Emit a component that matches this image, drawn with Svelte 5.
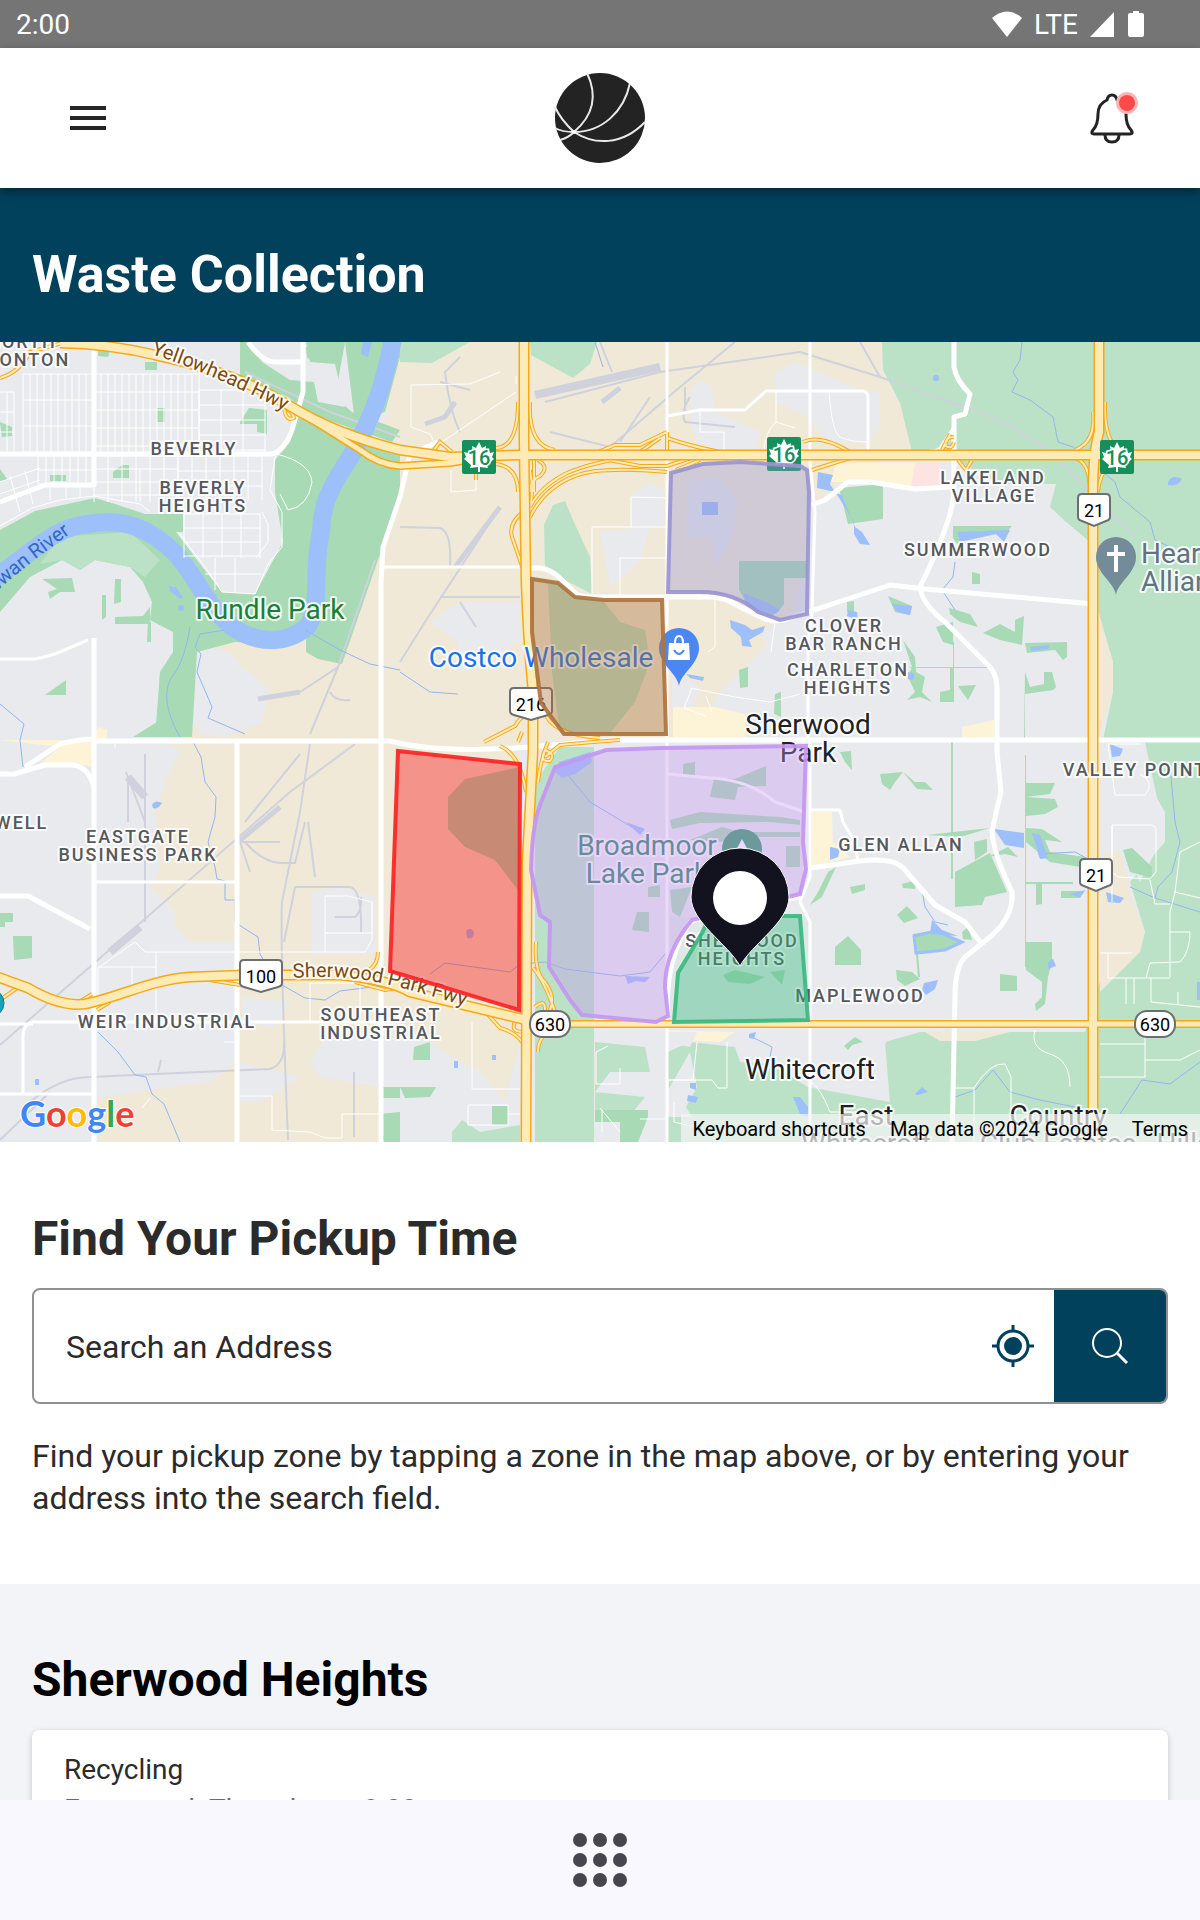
<script lang="ts">
	let address = '';

	// thin residential streets, drawn as a handful of regular grids
	function grid(x1: number, x2: number, y1: number, y2: number, stepX: number, stepY: number) {
		let d = '';
		for (let x = x1; x <= x2; x += stepX) d += `M${x} ${y1}V${y2}`;
		for (let y = y1; y <= y2; y += stepY) d += `M${x1} ${y}H${x2}`;
		return d;
	}

	const streets = [
		grid(23, 93, 32, 110, 7, 26),
		grid(38, 93, 114, 142, 8, 14),
		grid(94, 199, 32, 110, 7, 18),
		grid(199, 265, 48, 110, 22, 15),
		grid(94, 178, 114, 160, 14, 13),
		grid(178, 262, 114, 158, 14, 15),
		grid(184, 260, 172, 216, 19, 14),
		'M0 50H14V110M0 70H14M0 90H14M7 50V110M0 140L40 126M0 152L40 138M10 134L20 170M25 129L33 162M50 144V158M66 144V156M80 144V155M0 184L32 166L60 158L94 154M94 154L140 162L150 170M140 160V128',
		'M178 190L205 225L222 250L255 252L268 222L282 205V170L270 148L276 110M262 170L268 182V200L256 216M215 216V248M235 216V250M205 232H262',
		'M276 112Q310 120 312 140Q308 165 288 168L280 152',
		'M411 43V85L430 92L436 104M411 43L470 42L500 30M436 104L516 50M516 34V42',
		'M451 128V150L476 148V130M592 252V185H667M620 254V216H667M631 185V155L667 156M700 70V90H724V110M776 50V80L795 86M776 80Q765 90 764 108',
		'M829 50Q832 90 840 95Q850 100 868 100M715 256V305L708 310M775 280L771 310M690 346L735 355L770 360L800 352M706 354L712 370M692 346L684 366L706 374',
		'M145 610H365L372 598V560L348 554H325V610M325 591H372M98 672V626L135 600L145 610M156 610V680M98 625H156M132 625V645M310 680V641H360V675M240 754H272V788L310 790L325 796H342V772H380M224 700H237M150 756L142 766M115 401V406',
		'M472 680V747H520M468 763H508V783H468ZM508 772H520M596 710V742H620V726M596 710L608 704M697 700L693 738H668V770M668 738H712L718 746H727V700M640 777H666M600 766L620 790M602 768V790M674 760V780L700 786',
		'M811 740Q820 745 830 770H860M955 746H974V800M974 746Q990 720 1005 722L1011 735V800M1035 688Q1030 706 1050 712Q1070 718 1070 745M1100 702H1145V735H1100M1145 718H1180L1200 708',
		'M1112 483H1152Q1156 484 1156 488V530L1150 537L1118 535L1112 530ZM1112 483V560M1115 453H1145Q1156 440 1140 432M1115 453L1108 402H1140M1200 500L1180 510L1175 550L1170 570V635M1100 611H1132M1108 611V636H1170M1126 636V662M1134 636V662M1151 636V660L1200 665M1170 590H1190Q1190 610 1180 620L1150 621L1146 636M1178 650V662M1170 562H1155L1150 538M1175 550L1200 556M1145 688V702',
	];

	const minorRoads = [
		'M667 74L700 68H745L766 49H862Q868 49 868 56V110',
		'M667 0V800',
		'M810 0V120L815 170L812 270L808 300V398',
		'M810 398V535L800 560L810 580V800',
		'M0 317H35Q50 314 60 310L88 298',
		'M94 540H237',
		'M94 680H33Q23 682 23 695V752',
		'M110 680H400',
		'M0 752H94',
		'M668 432L710 436Q750 438 775 460L805 470',
		'M809 468H840L843 480L855 500L858 520',
		'M380 225H520',
		'M0 682H33',
	];

	const majorRoads = [
		'M94 0V143H45L0 160',
		'M0 112H272Q285 108 292 88L303 50V0M248 0Q262 20 275 20H303',
		'M94 296V800',
		'M237 398V800',
		'M438 100L410 112L400 155L383 205L381 240V800',
		'M0 432H14L45 423H72Q88 424 94 445M25 425L60 402Q80 397 94 397',
		'M94 399H390Q440 412 530 405L610 398H1200',
		'M520 226H540Q550 227 560 236L576 252Q582 255 592 255H712Q727 256 740 265L765 277Q780 281 790 276L890 243L925 247L1094 262',
		'M954 0V25Q956 38 970 52L965 72L954 75V150Q952 180 920 245Q922 262 945 280L985 320Q997 330 997 345V410L1001 450Q996 470 992 490Q993 510 1012 550Q1014 575 990 595L965 615Q955 625 955 655L952 800',
		'M954 87L942 105Q940 110 930 110M812 163L825 158L848 140H870L915 147L952 145',
		'M803 527L860 519Q895 515 905 528L935 563L965 580L982 602',
		'M0 554H28L90 587',
		'M668 674Q664 620 690 580Q730 565 800 555',
	];

	const highways = [
		'M60 1Q110 2 155 13Q235 30 290 64Q335 92 400 108L450 115L520 113H1200',
		'M290 64Q325 86 360 108Q380 123 400 124L450 121L500 113',
		'M524 -5V100L526 240Q528 300 533 350V410L527 520L526 805',
		'M1099 -5V90Q1093 110 1093 150V805',
		'M-5 634L28 646Q60 665 85 662C120 655 150 638 190 635L245 633H340Q390 638 410 650L526 678',
		'M570 682H1205',
	];

	const ramps = [
		'M0 36Q20 30 30 10L62 1',
		'M518 60Q518 105 496 106M530 60Q528 104 555 108M530 128Q534 150 530 165M518 150Q518 125 496 122',
		'M530 165Q540 145 565 132Q590 120 640 114M530 175Q545 145 575 134Q600 124 667 130M538 118Q550 125 540 134Q530 138 530 150M534 118V150M598 110L615 103H640L667 90M640 110L660 96M667 90V108M598 116L640 124L667 124L700 113',
		'M526 168Q508 180 512 195L524 230M284 66Q286 80 294 76Q292 68 284 66M434 108L440 100L452 110',
		'M667 96Q690 104 720 110M803 100Q820 92 850 110M812 128L850 116M676 128L700 118M942 108L950 92M954 95Q944 95 946 104Q952 108 954 100M958 118L966 128L972 118',
		'M1093 70Q1096 100 1075 108M1105 60Q1104 100 1120 108M1075 116Q1090 120 1090 150M1120 116Q1100 125 1098 150M1060 113L1064 116',
		'M484 400L515 384Q520 375 530 370M545 370Q550 392 600 396M518 400L522 390M548 400Q540 420 538 440M545 415L560 403Q590 400 620 398M500 404Q520 412 526 450M545 408Q556 412 550 419Q540 420 544 410',
		'M533 626Q545 640 555 670L565 676M536 600Q534 630 545 640Q556 655 550 668M522 700Q515 690 500 686L484 668M538 710Q538 695 550 690M515 680Q510 690 524 690M535 665Q545 656 545 668',
		'M0 658L20 644M76 662L92 652M97 668L110 660M210 638L245 628M210 638L240 643M340 634Q378 635 378 610M355 640L385 648L420 642',
		'M476 130V138',
	];

	const rails = [
		'M0 703L130 590L290 450L355 402',
		'M310 402L300 470L282 560Q280 600 288 798',
		'M460 90Q450 70 445 30L460 15M470 48L440 40M500 165L425 280L400 320M400 185L440 186Q452 190 450 225M520 255H440M460 260L476 285',
		'M600 0L612 30M690 55Q680 70 685 80L735 85M735 0L680 45L610 105L550 90M685 45V70M620 100L650 55M545 60L660 30L800 10',
		'M145 412V580M145 480L126 430M128 440V480M300 412L245 480M240 500H280M245 500Q262 520 280 521H295L305 480M295 545H350Q362 547 361 590M295 545L284 600M335 575H355Q362 570 361 555M240 500L250 530M308 480L315 535',
		'M30 760Q60 735 90 735L270 727Q285 722 284 700M158 730L161 718M0 798L50 750M354 730V795',
		'M375 218L338 325L300 350M338 325L310 392M330 350Q335 360 350 358',
		'M245 30L330 70L400 95M800 10L880 35L950 60Q1020 80 1060 120L1135 195',
		'M880 35L860 0',
	];

	const creeks = [
		'M225 288L200 292L195 305L201 312L197 330L212 365L208 376L245 392',
		'M190 285Q185 320 170 338Q160 360 180 395',
		'M305 288L340 308L370 322L400 328',
		'M0 362L24 382L20 398L23 425',
		'M400 330L430 350L458 352',
		'M193 400L201 415L205 440L216 455L215 475L208 500L215 525L217 537L225 539V558H235V580L242 585L258 595L260 612L270 630',
		'M282 643L305 656L325 658L340 649L372 645',
		'M98 690L118 710L135 733L146 735L152 752L164 762L180 800',
		'M430 632L445 621L510 630L520 622L545 620L565 627L620 634L650 630L665 612',
		'M568 433L590 460L640 490',
		'M1022 0L1020 18L1013 30L1018 38L1012 50L1030 58L1053 75L1058 100L1073 105L1115 140L1120 155L1150 180L1155 198L1170 205',
		'M955 220L953 235L942 248L955 268',
		'M1171 434L1175 480L1180 500L1172 530L1158 545L1155 556L1200 570M1130 545L1155 556',
		'M955 755L975 748L993 728L1010 750L1040 758L1100 770M1120 772L1142 738L1170 742L1200 720',
		'M922 548L925 565L935 580L948 583',
		'M1038 512L1075 510L1090 518',
		'M595 0L603 25',
		'M752 695L772 705L770 715',
	];

	const ponds = [
		'M818 130L833 133L830 142L835 150L817 146ZM836 151L842 153L855 185L862 190L870 203L860 202L854 192V180Z',
		'M957 190L1010 188L1004 200L996 192L960 200ZM848 268L857 270L858 278L847 274ZM892 262L912 264L910 273L897 270Z',
		'M702 160H718V173H702ZM730 278L745 283L752 288L765 284L763 290L749 298L752 305L742 304L741 295L731 286Z',
		'M686 332L704 335L703 339L690 336ZM1168 140Q1172 132 1182 137Q1178 145 1168 143Z',
		'M559 420L590 410L592 420L575 432L562 436L555 430Z',
		'M994 487L1024 491V506L1005 503ZM1032 491L1040 493L1048 516L1040 517ZM1110 402L1123 407L1120 414L1112 415ZM1106 550L1124 556L1120 561L1108 560ZM1070 552L1085 548L1080 556Z',
		'M830 505L840 507L838 515L830 518ZM924 641L938 638L935 647L926 653L922 648ZM1048 620L1053 617L1056 624L1048 627Z',
		'M625 634L650 635L645 640L636 639L628 642ZM626 480L645 487L640 493Z',
		'M466 589Q470 584 474 590Q474 598 467 596ZM152 463Q155 457 162 461Q158 468 153 466ZM454 719H458V726H454ZM492 713H496V718H492ZM35 737H39V743H35ZM1197 640H1200V658H1197Z',
		'M688 753L698 755L696 761L687 759ZM690 741H696V748L690 746ZM749 692L756 690L754 697L749 696ZM793 755H800L808 765V775L800 772ZM915 752L922 745L928 750L918 753Z',
		'M744 251L770 262L780 268L768 276L745 262ZM933 36A3 3 0 1 1 939 36A3 3 0 1 1 933 36ZM1030 305L1050 303L1048 307L1032 309ZM908 330L915 332L913 338L908 337Z',
		'M169 244L176 245L183 255L180 257L170 249ZM178 266A3 3 0 1 1 184 266A3 3 0 1 1 178 266Z',
	];

	const parks = [
		'M145 20H157V28H145ZM98 2H112L108 15L98 14ZM157 66H165V80H157ZM240 80L249 66L267 68V92L257 90V82H240ZM0 80L12 85V94L2 95ZM113 130L122 123H129V136H113ZM50 133H66V139H50ZM0 127L8 138L0 139Z',
		'M42 237L72 236L75 250H60L50 257L48 250L57 247ZM115 237H121V260L114 262ZM102 253H106V275L102 278ZM115 275L143 274L150 265V282H115ZM45 353L66 338V353ZM148 280H151V300H147Z',
		'M0 571H13V580H5V585H0ZM13 594H32V616L14 618ZM380 745H400V756H380ZM380 772L400 770V800H380ZM414 705L430 700V718H413ZM400 745L436 745L430 755L405 756ZM492 764H508V783H492Z',
		'M739 219H808V236H784V262L776 272L745 258L739 248Z',
		'M839 146L883 142V177L848 182ZM739 328L748 325V345L740 346ZM775 352L781 350V375L774 372ZM306 5L330 0V20L307 16Z',
		'M953 184L1012 184L1005 192L975 190L957 202L953 196ZM972 230L980 232V242H972ZM847 260L854 259V270H847ZM888 254L912 264L910 273L895 270ZM949 266L970 272L978 285L960 280L950 272ZM983 291L1000 282L1015 290V278L1024 274L1022 303L1000 298ZM1025 301L1067 300V315L1063 318L1055 308L1027 311Z',
		'M1025 330L1030 345L1044 342V330H1052L1056 345L1053 348L1025 352V398H1024ZM936 285L953 280V303L943 300ZM953 300H954V325H989V326H954V360H940V350L950 348V326H910V325H953ZM903 298L915 315L916 330L925 335L922 350L932 360L920 355L907 358L915 350L908 335L912 325ZM958 344L976 343L968 358L962 350Z',
		'M840 410L851 409L852 428L845 420ZM880 432L903 430L895 440L890 448L882 442ZM903 430L915 440L925 440L933 448L917 447ZM951 398H953V537H951ZM1025 413H1026V625H1025ZM1026 441H1055L1050 452L1026 455ZM1026 455L1055 457L1058 465L1045 472L1026 474Z',
		'M1026 486L1042 487L1062 500L1045 498L1050 510L1085 515L1080 525L1050 520L1026 500ZM955 530L990 511L1007 550L985 555L982 563L955 565ZM974 500L987 497V510L975 518ZM927 493L990 486L960 495ZM988 515L1008 505L1018 515L1005 512ZM1026 540H1073V542H1042V562L1036 563V542H1026ZM1061 549H1085L1078 556H1061Z',
		'M850 545L865 542V548L852 552ZM902 542L917 538L915 547L903 546ZM897 573L907 564L918 576L904 581ZM835 605L848 594L861 608V623H835ZM913 592L935 588L960 599L950 607L918 610ZM962 590L968 585L972 598L963 597Z',
		'M1026 600H1052V620L1048 635L1045 662L1036 669L1035 662L1042 655V640L1026 628ZM1000 632L1017 634V649H1000ZM896 628L912 630L920 637L905 644L897 638ZM916 612H918L920 635H918ZM844 704L855 695L863 700L852 703L848 708ZM836 525L822 555L810 563L818 550L828 530Z',
		'M683 422L695 420V434L683 435ZM714 436L735 437L766 424V444L738 445L735 458L710 455ZM670 478L700 470L780 475L800 478V483L770 480L700 481L672 487ZM690 498L722 485L740 490L800 490V495H740L720 500ZM637 570H649V590L632 588ZM648 545L660 543V555H648ZM670 548L692 545L680 575L672 570ZM786 504H800V525H786Z',
		'M595 768H648V775L638 800H620V780H595ZM723 633L735 628L765 635L750 642L728 640ZM770 630L785 628L782 643ZM1123 508L1132 506L1152 525V536L1130 530Z',
		'M176 332H192V345H176ZM155 395L160 332H170L192 395Z',
	];

	// lines: [text, x, baseline]
	const districts = [
		['NORTH', 22, 6],
		['EDMONTON', 13, 24],
		['BEVERLY', 194, 113],
		['BEVERLY', 203, 152],
		['HEIGHTS', 203, 170],
		['LAKELAND', 993, 142],
		['VILLAGE', 994, 160],
		['SUMMERWOOD', 978, 214],
		['CLOVER', 844, 290],
		['BAR RANCH', 844, 308],
		['CHARLETON', 848, 334],
		['HEIGHTS', 848, 352],
		['VALLEY POINT', 1135, 434],
		['BONNIE WELL', -20, 487],
		['EASTGATE', 138, 501],
		['BUSINESS PARK', 138, 519],
		['GLEN ALLAN', 901, 509],
		['SHERWOOD', 742, 605],
		['HEIGHTS', 742, 623],
		['MAPLEWOOD', 860, 660],
		['SOUTHEAST', 381, 679],
		['INDUSTRIAL', 381, 697],
		['WEIR INDUSTRIAL', 167, 686],
	] as [string, number, number][];

	const towns = [
		['Sherwood', 808, 392],
		['Park', 808, 420],
		['Whitecroft', 810, 737],
		['East', 866, 783],
		['Whitecroft', 866, 811],
		['Country', 1058, 783],
		['Club Estates', 1058, 811],
		['Hills', 1184, 811],
	] as [string, number, number][];

	const zones = [
		{ name: 'Industrial', color: '#fb2323', opacity: 0.43, d: 'M398 409L520 422L519 668L390 629Z' },
		{ name: 'Broadmoor', color: '#c496f2', opacity: 0.36, d: 'M606 408L660 406L806 404L803 500L806 527L800 552L692 578Q665 610 665 645L668 674L656 680L582 673L570 658L549 625L550 580L540 573L531 528Q532 485 540 463L555 425Z' },
		{ name: 'Clover Bar', color: '#9a95d2', opacity: 0.38, d: 'M671 131L703 122L740 120L800 124L807 128L809 150L807 272L780 278L758 270Q735 250 700 250H668Z' },
		{ name: 'Costco', color: '#ad7440', opacity: 0.4, d: 'M532 237L558 241L575 255L604 258L662 258L666 392H564L541 361L532 290Z' },
		{ name: 'Sherwood Heights', color: '#3bb882', opacity: 0.38, d: 'M710 574H800L808 678L674 680L678 631L702 591Z' },
	];

	const leaf = 'M0 -15L3 -9L7 -11L6 -3L10 -7L11 -4L15 -5L13 0L15 2L8 8L9 11L1 10V15H-1V10L-9 11L-8 8L-15 2L-13 0L-15 -5L-11 -4L-10 -7L-6 -3L-7 -11L-3 -9Z';
	const pin = 'M0 38C-2 25 -20 16 -20 0A20 20 0 1 1 20 0C20 16 2 25 0 38Z';
</script>

<div class="app">
	<div class="status-bar">
		<span>2:00</span>
		<div class="status-icons">
			<svg width="30" height="26" viewBox="0 0 30 26" aria-hidden="true"><path d="M15 26L0 7Q15 -6 30 7Z" /></svg>
			<span>LTE</span>
			<svg width="24" height="26" viewBox="0 0 24 26" aria-hidden="true"><path d="M24 1V26H0Z" /></svg>
			<svg class="battery" width="16" height="26" viewBox="0 0 16 26" aria-hidden="true"><path d="M5 0h6v2h3q2 0 2 2v20q0 2-2 2H2q-2 0-2-2V4q0-2 2-2h3z" /></svg>
		</div>
	</div>

	<header>
		<button class="icon-button menu" aria-label="Menu">
			<svg width="36" height="24" viewBox="0 0 36 24"><path d="M0 2H36M0 12H36M0 22H36" stroke="#262626" stroke-width="4" /></svg>
		</button>
		<svg class="logo" width="92" height="92" viewBox="0 0 92 92" role="img" aria-label="Logo">
			<circle cx="46" cy="46" r="45" fill="#232323" />
			<g fill="none" stroke="#e9e9e9" stroke-width="2">
				<path d="M33 1C43 22 41 42 20 60Q14 66 6 68" />
				<path d="M76 11C70 40 48 60 20 60Q8 60 1 56" />
				<path d="M91 50C68 74 40 73 20 60Q7 48 1 35" />
			</g>
			<circle cx="20" cy="60" r="2" fill="#fff" />
		</svg>
		<button class="icon-button bell" aria-label="Notifications">
			<svg width="52" height="54" viewBox="0 0 52 54">
				<g fill="none" stroke="#232323" stroke-width="3" stroke-linejoin="round">
					<path d="M19 9Q20 4 24 4T29 9Q38 13 38 23Q38 34 43 39Q46 43 42 43H6Q2 43 5 39Q10 34 10 23Q10 13 19 9Z" />
					<path d="M17 44Q17 51 24 51T31 44" />
				</g>
				<circle cx="39" cy="12" r="11" fill="#ffb5b5" />
				<circle cx="39" cy="12" r="8" fill="#ff4a4a" />
			</svg>
		</button>
	</header>

	<main>
		<div class="title">
			<h1>Waste Collection</h1>
		</div>

		<div class="map">
			<svg class="map-canvas" viewBox="0 0 1200 800" preserveAspectRatio="xMidYMid slice" role="img" aria-label="Pickup zone map">
				<rect width="1200" height="800" fill="#e8eaed" />

				<g fill="#f0e9d8">
					<path d="M400 0H882V28L900 61L912 110L860 125L812 165L795 275L770 300L720 350L700 398H520V700L505 760L480 730L460 720L430 700L380 665V400L340 320Z" />
					<path d="M190 300L300 285L385 200V398H180L200 380L260 375L270 350L250 330L235 325L230 310Z" />
					<path d="M165 400H380V690L330 690L310 720L320 735L380 745V800H98V755L210 740L237 720L240 600H190L175 585V570L150 545L160 530L155 470L165 440L180 410Z" />
				</g>
				<g fill="#e8eaed">
					<path d="M195 320L235 315L250 340L270 350L262 380L225 395L200 392Z" />
					<path d="M312 550L340 545L375 555V612H312ZM330 690L380 695V740L325 735L310 720ZM242 655L290 660L275 685L242 680ZM240 720L300 735L260 760H240Z" />
					<path d="M430 280L460 260H520V298L480 325L458 330V300ZM690 50L700 38L712 45L715 70L760 90L755 108H700L690 80ZM776 30L795 20L860 48L880 50V85L868 100H830L800 70L775 60ZM631 155L650 140L664 150V185H631ZM600 190L650 185L640 220L610 245Z" />
					<path d="M672 330L700 345L690 375L672 365ZM760 290L812 260V395H770L785 340Z" />
					<path d="M688 140L720 135L738 160L730 200L715 225L712 195H688Z" />
				</g>
				<g fill="#fdf3d6">
					<path d="M0 398H95V425L75 422H40L60 405ZM836 121H915V146L880 140H830ZM673 365H715L745 372V398H673ZM962 385L994 378V398H962ZM812 470H832L833 500L850 515L812 525ZM664 688L735 690L720 700L675 698ZM98 385L107 388V398H94Z" />
				</g>
				<path d="M915 121H940L938 147L911 144Z" fill="#fde4e2" />

				<g fill="#bbe2c6">
					<path d="M882 0H1200V800H668V710L690 700L735 705L740 720L770 722L808 745L890 760L885 700L920 690H1085L1100 640L1130 620L1145 590L1130 540L1165 500V470L1130 410L1103 398L1113 350V320L1100 280L1092 290L1090 200L1065 179L1050 165L1056 142H1000L960 120L912 110L900 61L883 28Z" />
					<path d="M400 0H470L432 21L400 20ZM530 0H597L590 22L573 36L531 13ZM544 183L553 163L565 159L573 178L590 215L592 252L545 228Z" />
					<path d="M548 242L560 242L575 255H600L620 280L645 288L650 320L635 360L610 391H560L552 330Z" />
					<path d="M535 440L560 405H594V800H535ZM595 700L645 705L650 730L610 730L595 750L645 755L625 780L595 770ZM452 790L462 778L480 790L520 783V800H452Z" />
					<path d="M670 575H810V685H670Z" opacity=".2" />
				</g>
				<path d="M448 455L465 437L520 425L518 548L495 518L465 505L448 487Z" fill="#a0d8b4" />
				<path d="M1103 512L1120 508L1133 560L1145 590L1140 610L1100 650ZM925 690H1010L975 699H940ZM1090 240L1113 320V350L1098 398H1085V260Z" fill="#f0e9d8" />
				<path d="M1100 398L1145 400L1158 460L1165 490L1140 540L1125 510L1100 500ZM811 690H893L880 710V755L815 745Z" fill="#e8eaed" />
				<path d="M664 690H697L690 705L665 700ZM667 750L690 710L697 745L686 765L692 775H667Z" fill="#e8eaed" />

				<g fill="#a8dab5">
					<path d="M0 188L35 169L95 156L115 162L145 172H183V190H176L200 222L222 250L255 252L268 228L283 200L275 150V118L290 100L297 76L360 88L400 110V158L380 212L342 322L318 317L306 310V290L270 302L235 300L197 310L192 395H133L157 380L160 330L173 310V290L150 278L152 260L143 240L130 225L95 218L80 228L62 218L30 235L0 270Z" />
					<path d="M242 0H345L335 55L352 70L400 88L392 100L310 72L288 55L240 35Z" />
					<path d="M345 0H400V15L385 70L355 80Z" />
				</g>
				<path d="M240 0H302V45L290 55L240 33Z" fill="#a8dab5" />
				<path d="M248 0H306L310 20L335 22L345 65L318 60L314 40L290 38L262 20Z" fill="#e8eaed" />
				<path d="M60 195L130 190L160 218L145 235L130 225L95 218L80 228L62 218L40 222Z" fill="#bbe2c6" />
				{#each parks as d}
					<path {d} fill="#a8dab5" />
				{/each}

				<g fill="none" stroke="#cfd2dc" stroke-width="2">
					{#each rails as d}
						<path {d} />
					{/each}
					<path d="M535 53L660 25M128 435L145 455M110 610L140 585" stroke-width="8" />
					<path d="M425 82L445 75L455 60M500 165L455 225M238 500L280 465M602 60L620 46M258 357L300 350" stroke-width="5" />
				</g>

				<path class="river" d="M-8 238C35 208 55 185 88 182C125 176 150 186 176 212C200 240 205 262 232 285C262 305 290 300 308 284C322 262 312 225 321 190C322 155 335 140 352 112C375 70 385 40 394 -8" />
				<path d="M363 0H372L368 15L361 12Z" fill="#9dc0fa" />
				{#each creeks as d}
					<path class="creek" {d} />
				{/each}
				{#each ponds as d}
					<path {d} fill="#9dbffa" />
				{/each}
				<path d="M914 594L936 589L962 600L945 608L916 611Z" fill="none" stroke="#9dbffa" stroke-width="3" />
				<path d="M932 578L942 588L958 594L930 592Z" fill="#9dbffa" />

				<g fill="none" stroke="#fff" stroke-linejoin="round">
					{#each streets as d}
						<path {d} stroke-width="1" />
					{/each}
					{#each minorRoads as d}
						<path {d} stroke-width="3" />
					{/each}
					{#each majorRoads as d}
						<path {d} stroke-width="5" />
					{/each}
				</g>

				<g fill="none">
					{#each ramps as d}
						<path {d} stroke="#f5a914" stroke-width="4" />
					{/each}
					{#each ramps as d}
						<path {d} stroke="#fdeab4" stroke-width="2" />
					{/each}
					{#each highways as d, i}
						<path {d} stroke="#f5a914" stroke-width={i === 1 || i > 4 ? 8 : 11} />
					{/each}
					{#each highways as d, i}
						<path {d} stroke="#fdeab4" stroke-width={i === 1 || i > 4 ? 5 : 8} />
					{/each}
				</g>

				<circle cx="-10" cy="661" r="14" fill="#16a5b5" stroke="#0b7f92" />

				<g class="label district">
					{#each districts as [text, x, y]}
						<text {x} {y}>{text}</text>
					{/each}
				</g>
				<g class="label place town">
					{#each towns as [text, x, y]}
						<text {x} {y}>{text}</text>
					{/each}
				</g>
				<text class="label place" x="270" y="277" fill="#188038">Rundle Park</text>
				<text class="label place" x="541" y="325" fill="#1a73e8">Costco Wholesale</text>
				<text class="label place" x="647" y="513" fill="#338568">Broadmoor</text>
				<text class="label place" x="647" y="541" fill="#338568">Lake Park</text>
				<text class="label place start" x="1141" y="221" fill="#5f7480">Heartland</text>
				<text class="label place start" x="1141" y="249" fill="#5f7480">Alliance Church</text>

				<path id="yellowhead" d="M151 12Q215 32 310 82" fill="none" />
				<path id="sherwood-fwy" d="M293 636Q345 632 390 643T520 681" fill="none" />
				<path id="river-label" d="M-130 310L-10 256Q25 222 90 178" fill="none" />
				<text class="label road"><textPath href="#yellowhead">Yellowhead Hwy</textPath></text>
				<text class="label road"><textPath href="#sherwood-fwy">Sherwood Park Fwy</textPath></text>
				<text class="river-name"><textPath href="#river-label" startOffset="91%" text-anchor="end">Saskatchewan River</textPath></text>

				<g transform="translate(679 306)">
					<path d={pin} fill="#4a87f3" />
					<path d="M-10 -5H10L11 12H-11Z" fill="#fff" />
					<path d="M-4 -5Q-4 -12 0 -12T4 -5" fill="#4a87f3" stroke="#fff" stroke-width="2" />
					<path d="M-5 2Q0 10 5 2" fill="none" stroke="#4a87f3" stroke-width="2" />
				</g>
				<g transform="translate(1116 215)">
					<path d={pin} fill="#748c99" />
					<path d="M0 -12V15M-9 -3H9" stroke="#fff" stroke-width="4" />
				</g>
				<circle cx="742" cy="507" r="20" fill="#3a9c6c" />
				<path d="M742 497L750 512H734Z" fill="#fff" />

				{#each [[479, 115], [784, 112], [1117, 115]] as [x, y]}
					<g transform="translate({x} {y})">
						<rect x="-17" y="-17" width="34" height="34" rx="2" fill="#158f5b" />
						<path d={leaf} fill="#fff" />
						<text class="route trunk" y="8">16</text>
					</g>
				{/each}
				{#each [[531, 362, '216', 21], [261, 634, '100', 21], [1094, 168, '21', 16], [1096, 533, '21', 16]] as [x, y, text, r]}
					<g transform="translate({x} {y})">
						<path d="M{-r + 4} -16H{r - 4}Q{r} -16 {r} -12V7Q{r} 10 {r - 4} 11L0 16L{4 - r} 11Q{-r} 10 {-r} 7V-12Q{-r} -16 {4 - r} -16Z" fill="#fff" stroke="#6b6f72" stroke-width="2" />
						<text class="route" y="7">{text}</text>
					</g>
				{/each}
				{#each [550, 1155] as x}
					<g transform="translate({x} 682)">
						<rect x="-20" y="-13" width="40" height="26" rx="12" fill="#fff" stroke="#6b6f72" stroke-width="2" />
						<text class="route" y="7">630</text>
					</g>
				{/each}

				{#each zones as zone}
					<path d={zone.d} fill={zone.color} fill-opacity={zone.opacity} stroke={zone.color} stroke-width="4" stroke-opacity=".92" />
				{/each}

				<path d="M740 624C728 602 691 580 691 555A49 49 0 0 1 789 555C789 580 752 602 740 624Z" fill="#13131f" stroke="#fff" stroke-width="1" />
				<circle cx="740" cy="556" r="27" fill="#fff" />

				<text class="google" x="20" y="785"><tspan fill="#4285f4">G</tspan><tspan fill="#ea4335">o</tspan><tspan fill="#fbbc05">o</tspan><tspan fill="#4285f4">g</tspan><tspan fill="#34a853">l</tspan><tspan fill="#ea4335">e</tspan></text>
			</svg>
			<div class="attribution">
				<button>Keyboard shortcuts</button>
				<span>Map data ©2024 Google</span>
				<a href="#terms">Terms</a>
			</div>
		</div>

		<section class="find">
			<h2>Find Your Pickup Time</h2>
			<form class="search" on:submit|preventDefault>
				<input type="text" aria-label="Search an Address" placeholder="Search an Address" bind:value={address} />
				<button type="button" class="locate" aria-label="Use my location">
					<svg width="42" height="42" viewBox="0 0 42 42">
						<circle cx="21" cy="21" r="15" fill="none" stroke="#02415b" stroke-width="3" />
						<circle cx="21" cy="21" r="9" fill="#02415b" />
						<path d="M21 0V6M21 36V42M0 21H6M36 21H42" stroke="#02415b" stroke-width="3" />
					</svg>
				</button>
				<button type="submit" class="submit" aria-label="Search">
					<svg width="36" height="36" viewBox="0 0 36 36" fill="none" stroke="#fff" stroke-width="2">
						<circle cx="15" cy="15" r="14" />
						<path d="M25 25L35 35" stroke-width="3" />
					</svg>
				</button>
			</form>
			<p>Find your pickup zone by tapping a zone in the map above, or by entering your address into the search field.</p>
		</section>

		<section class="zone">
			<h2>Sherwood Heights</h2>
			<div class="card">
				<div>Recycling</div>
				<div class="schedule">Every week Thursday at 8:00 am</div>
			</div>
		</section>
	</main>

	<nav>
		<button class="icon-button" aria-label="Apps">
			<svg width="54" height="54" viewBox="0 0 54 54" fill="#47464f">
				{#each [7, 27, 47] as y}
					{#each [7, 27, 47] as x}
						<circle cx={x} cy={y} r="7" />
					{/each}
				{/each}
			</svg>
		</button>
	</nav>
</div>

<style>
	.app {
		display: flex;
		flex-direction: column;
		height: 100vh;
		font-family: Roboto, "Liberation Sans", sans-serif;
		color: #2b2b2b;
		background: #fff;
	}

	button {
		padding: 0;
		border: none;
		background: none;
		font: inherit;
		color: inherit;
		cursor: pointer;
	}

	svg {
		display: block;
	}

	h1,
	h2,
	p {
		margin: 0;
	}

	.status-bar {
		flex: none;
		display: flex;
		align-items: center;
		justify-content: space-between;
		height: 48px;
		padding: 0 56px 0 16px;
		background: #757575;
		color: #fff;
		font-size: 28px;
	}

	.status-icons {
		display: flex;
		align-items: center;
		gap: 12px;
		fill: #fff;
	}

	.battery {
		margin-left: 2px;
	}

	header {
		flex: none;
		position: relative;
		z-index: 1;
		display: grid;
		grid-template-columns: 1fr auto 1fr;
		align-items: center;
		height: 140px;
		padding: 0 60px 0 70px;
		background: #fff;
		box-shadow: 0 4px 10px rgba(0, 0, 0, 0.4);
	}

	.icon-button {
		display: flex;
	}

	.menu {
		justify-self: start;
	}

	.logo {
		margin-right: 10px;
	}

	.bell {
		justify-self: end;
	}

	main {
		flex: 1;
		min-height: 0;
		overflow-y: auto;
		scrollbar-width: none;
	}

	.title {
		padding: 57px 32px 37px;
		background: #02415b;
		color: #fff;
	}

	h1 {
		font-size: 52px;
		line-height: 60px;
	}

	h2 {
		font-size: 48px;
		line-height: 56px;
	}

	.map {
		position: relative;
		height: 800px;
		overflow: hidden;
	}

	.map-canvas {
		width: 100%;
		height: 100%;
	}

	.river {
		fill: none;
		stroke: #9dc0fa;
		stroke-width: 18px;
	}

	.creek {
		fill: none;
		stroke: #93b6ee;
		stroke-width: 1px;
	}

	.label {
		paint-order: stroke;
		stroke: rgba(255, 255, 255, 0.85);
		stroke-width: 4px;
		stroke-linejoin: round;
		text-anchor: middle;
	}

	.district {
		font-size: 18px;
		font-weight: 500;
		letter-spacing: 2px;
		fill: #55585c;
	}

	.place {
		font-size: 28px;
	}

	.town {
		fill: #202124;
	}

	.start {
		text-anchor: start;
	}

	.road {
		font-size: 20px;
		text-anchor: start;
		fill: #7a4a12;
	}

	.river-name {
		font-size: 20px;
		fill: #3268c8;
	}

	.route {
		font-size: 18px;
		text-anchor: middle;
	}

	.trunk {
		font-size: 20px;
		font-weight: 500;
		fill: #158f5b;
		paint-order: stroke;
		stroke: #fff;
		stroke-width: 3px;
	}

	.google {
		font-family: Lato, sans-serif;
		font-size: 36px;
		font-weight: 700;
		paint-order: stroke;
		stroke: #fff;
		stroke-width: 2px;
	}

	.attribution {
		position: absolute;
		right: 0;
		bottom: 0;
		display: flex;
		gap: 24px;
		padding: 2px 12px 0 11px;
		background: rgba(245, 245, 245, 0.7);
		color: #000;
		font-size: 20px;
		line-height: 26px;
	}

	.attribution a {
		color: inherit;
		text-decoration: none;
	}

	.find {
		padding: 69px 32px 65px;
	}

	.search {
		display: flex;
		height: 112px;
		margin: 21px 0 31px;
		border: 2px solid #8f9193;
		border-radius: 8px;
		overflow: hidden;
	}

	.search input {
		flex: 1;
		min-width: 0;
		padding: 2px 32px 0;
		border: none;
		outline: none;
		background: none;
		font: inherit;
		font-size: 32px;
		color: #2b2b2b;
	}

	.search input::placeholder {
		color: #2b2b2b;
		opacity: 1;
	}

	.locate {
		padding: 0 20px;
	}

	.submit {
		display: flex;
		align-items: center;
		justify-content: center;
		width: 112px;
		background: #02415b;
	}

	p {
		font-size: 32px;
		line-height: 42px;
	}

	.zone {
		padding: 68px 32px 60px;
		background: #f3f4f8;
		color: #000;
	}

	.card {
		margin-top: 22px;
		padding: 20px 32px;
		border-radius: 8px;
		background: #fff;
		box-shadow: 0 2px 6px rgba(0, 0, 0, 0.2);
		color: #2b2b2b;
		font-size: 28px;
		line-height: 40px;
	}

	.schedule {
		color: #6b6b6b;
	}

	nav {
		flex: none;
		display: flex;
		align-items: center;
		justify-content: center;
		height: 120px;
		background: #faf8ff;
	}
</style>
